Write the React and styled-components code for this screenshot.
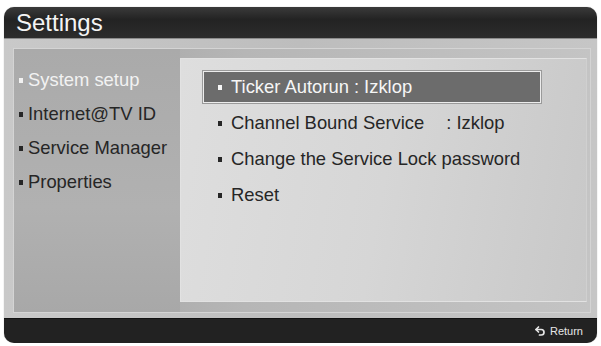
import React from "react";
import styled, { createGlobalStyle } from "styled-components";
import { Undo2 } from "lucide-react";

const menuItems = [
  { label: "System setup", active: true },
  { label: "Internet@TV ID" },
  { label: "Service Manager" },
  { label: "Properties" },
];

const options = [
  { label: "Ticker Autorun", value: ": Izklop", selected: true, gap: 5 },
  { label: "Channel Bound Service", value: ": Izklop", gap: 22 },
  { label: "Change the Service Lock password" },
  { label: "Reset" },
];

const App = () => {
  return (
    <>
      <GlobalStyle />
      <Frame>
        <Header>
          <Title>Settings</Title>
        </Header>
        <Body>
          <Inner>
            <Menu>
              {menuItems.map((item) => (
                <MenuItem key={item.label} active={item.active}>
                  <Bullet />
                  {item.label}
                </MenuItem>
              ))}
            </Menu>
            <Panel>
              {options.map((opt) => (
                <Option key={opt.label} selected={opt.selected}>
                  <OptionBullet />
                  <span>{opt.label}</span>
                  {opt.value && (
                    <span style={{ marginLeft: opt.gap }}>{opt.value}</span>
                  )}
                </Option>
              ))}
            </Panel>
          </Inner>
        </Body>
        <Footer>
          <ReturnHint>
            <Undo2 size={12} strokeWidth={3.4} />
            Return
          </ReturnHint>
        </Footer>
      </Frame>
    </>
  );
};

export default App;

const GlobalStyle = createGlobalStyle`
  html, body {
    margin: 0;
    padding: 0;
    background: #ffffff;
    font-family: "Liberation Sans", Arial, sans-serif;
  }
  *, *::before, *::after {
    box-sizing: border-box;
  }
`;

const Frame = styled.div`
  margin: 7px 0 0 4px;
  width: 593px;
  height: 336px;
  border-radius: 10px;
  overflow: hidden;
  display: flex;
  flex-direction: column;
  background: #c2c2c2;
  box-shadow: 0 0 1px rgba(0, 0, 0, 0.4);
`;

const Header = styled.div`
  height: 32px;
  flex: none;
  display: flex;
  align-items: center;
  padding-left: 12px;
  background: linear-gradient(#3a3a3a, #232323 40%, #2c2c2c);
  border-bottom: 1px solid #8c8c8c;
`;

const Title = styled.div`
  color: #f4f4f4;
  font-size: 24px;
  line-height: 1;
  margin-top: 1px;
`;

const Body = styled.div`
  flex: 1;
  padding: 9px 6px 5px 9px;
  background: linear-gradient(90deg, #c9c9c9, #bdbdbd 50%, #c6c6c6);
  display: flex;
`;

const Inner = styled.div`
  flex: 1;
  display: flex;
  border: 1px solid #d4d4d4;
  background: linear-gradient(90deg, #b4b4b4, #aaaaaa 20%, #b6b6b6 40%, #c4c4c4);
`;

const Menu = styled.div`
  width: 166px;
  flex: none;
  padding: 14px 0 0 5px;
  display: flex;
  flex-direction: column;
  background: linear-gradient(180deg, #aaaaaa, #b1b1b1 60%, #a8a8a8);
`;

const MenuItem = styled.div`
  height: 34px;
  display: flex;
  align-items: center;
  gap: 5px;
  font-size: 18.4px;
  color: ${({ active }) => (active ? "#f2f2f2" : "#262626")};
`;

const Bullet = styled.i`
  width: 4px;
  height: 5px;
  background: currentColor;
  flex: none;
  margin-top: 1px;
`;

const OptionBullet = styled(Bullet)`
  margin-right: 9px;
`;

const Panel = styled.div`
  flex: 1;
  margin: 9px 3px 10px 0;
  padding: 12px 0 0 22px;
  display: flex;
  flex-direction: column;
  gap: 4px;
  border: 1px solid #e2e2e2;
  border-right-color: #d0d0d0;
  background: linear-gradient(100deg, #dedede, #d6d6d6 50%, #c8c8c8);
`;

const Option = styled.div`
  width: 338px;
  height: 32px;
  display: flex;
  align-items: center;
  padding-left: 14px;
  font-size: 18.4px;
  color: ${({ selected }) => (selected ? "#f6f6f6" : "#262626")};
  background: ${({ selected }) => (selected ? "#6c6c6c" : "transparent")};
  border: 1px solid ${({ selected }) => (selected ? "#ececec" : "transparent")};
  box-shadow: ${({ selected }) => (selected ? "0 0 0 1px #9a9a9a" : "none")};
`;

const Footer = styled.div`
  height: 25px;
  flex: none;
  display: flex;
  align-items: center;
  justify-content: flex-end;
  padding-right: 14px;
  background: #222222;
  border-top: 1px solid #121212;
`;

const ReturnHint = styled.div`
  display: flex;
  align-items: center;
  gap: 4px;
  color: #e6e6e6;
  font-size: 11px;
`;
